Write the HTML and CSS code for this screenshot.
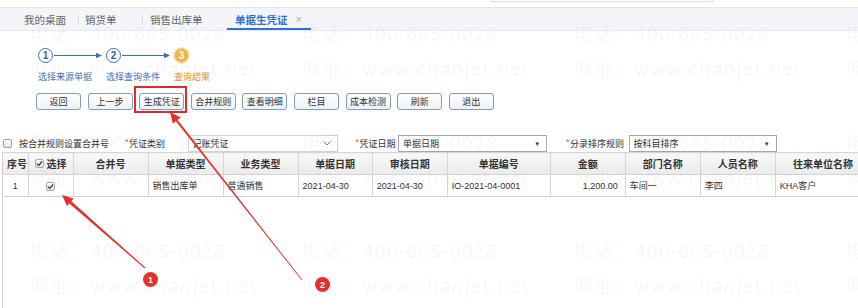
FILE: index.html
```html
<!DOCTYPE html>
<html lang="zh-CN">
<head>
    <meta charset="UTF-8">
    <meta name="viewport" content="width=device-width, initial-scale=1.0">
    <title>单据生凭证</title>
    <link rel="stylesheet" href="styles.css">
</head>
<body>
<div class="page">

    <div class="topstrip"><div class="scroll-edge"></div></div>

    <!-- 页签 -->
    <div class="tabs">
        <span class="tab first">我的桌面</span>
        <span class="sep"></span>
        <span class="tab">销货单</span>
        <span class="sep"></span>
        <span class="tab wide">销售出库单</span>
        <span class="tab active">单据生凭证<span class="close">×</span></span>
    </div>

    <!-- 步骤 -->
    <div class="steps">
        <div class="step">
            <div class="step-head">
                <span class="num">1</span>
                <svg class="arrow" width="48" height="7" viewBox="0 0 48 7"><line x1="0" y1="3.5" x2="43" y2="3.5"/><polygon points="42,0.8 48,3.5 42,6.2"/></svg>
            </div>
            <div class="step-label">选择来源单据</div>
        </div>
        <div class="step">
            <div class="step-head">
                <span class="num">2</span>
                <svg class="arrow" width="48" height="7" viewBox="0 0 48 7"><line x1="0" y1="3.5" x2="43" y2="3.5"/><polygon points="42,0.8 48,3.5 42,6.2"/></svg>
            </div>
            <div class="step-label">选择查询条件</div>
        </div>
        <div class="step current">
            <div class="step-head">
                <span class="num">3</span>
            </div>
            <div class="step-label">查询结果</div>
        </div>
    </div>

    <!-- 按钮 -->
    <div class="toolbar">
        <button class="btn">返回</button>
        <button class="btn">上一步</button>
        <button class="btn">生成凭证</button>
        <button class="btn">合并规则</button>
        <button class="btn">查看明细</button>
        <button class="btn">栏目</button>
        <button class="btn">成本检测</button>
        <button class="btn">刷新</button>
        <button class="btn">退出</button>
    </div>

    <!-- 条件 -->
    <div class="filter">
        <span class="chk"></span>
        <span class="flabel">按合并规则设置合并号</span>
        <span class="field f-type"><i class="req">*</i>凭证类别</span>
        <span class="combo c-type">记账凭证
            <svg width="8" height="5" viewBox="0 0 8 5"><polyline points="0.5,0.5 4,4 7.5,0.5"/></svg>
        </span>
        <span class="field f-date"><i class="req">*</i>凭证日期</span>
        <span class="combo c-date">单据日期<b class="down">▼</b></span>
        <span class="field f-sort"><i class="req">*</i>分录排序规则</span>
        <span class="combo c-sort">按科目排序<b class="down">▼</b></span>
    </div>

    <!-- 列表 -->
    <div class="grid">
        <table>
            <colgroup>
                <col style="width:25px"><col style="width:45px"><col style="width:75px"><col style="width:75px">
                <col style="width:75px"><col style="width:74px"><col style="width:75px"><col style="width:103px">
                <col style="width:75px"><col style="width:75px"><col style="width:75px"><col style="width:95px">
            </colgroup>
            <tr>
                <th>序号</th>
                <th><span class="pick"><span class="cb"><svg width="7" height="7" viewBox="0 0 7 7"><polyline points="1,3.6 2.8,5.4 6,1.5"/></svg></span>选择</span></th>
                <th>合并号</th>
                <th>单据类型</th>
                <th>业务类型</th>
                <th>单据日期</th>
                <th>审核日期</th>
                <th>单据编号</th>
                <th>金额</th>
                <th>部门名称</th>
                <th>人员名称</th>
                <th>往来单位名称</th>
            </tr>
            <tr>
                <td class="c">1</td>
                <td class="c"><span class="cb"><svg width="7" height="7" viewBox="0 0 7 7"><polyline points="1,3.6 2.8,5.4 6,1.5"/></svg></span></td>
                <td></td>
                <td>销售出库单</td>
                <td>普通销售</td>
                <td>2021-04-30</td>
                <td>2021-04-30</td>
                <td>IO-2021-04-0001</td>
                <td class="r">1,200.00</td>
                <td>车间一</td>
                <td>李四</td>
                <td>KHA客户</td>
            </tr>
        </table>
    </div>

    <!-- 水印 -->
    <div class="watermark">
        <div class="wm"><p>电话：400-665-0028</p><p>网址：www.chanjet.net</p></div>
        <div class="wm"><p>电话：400-665-0028</p><p>网址：www.chanjet.net</p></div>
        <div class="wm"><p>电话：400-665-0028</p><p>网址：www.chanjet.net</p></div>
        <div class="wm"><p>电话：400-665-0028</p><p>网址：www.chanjet.net</p></div>
        <div class="wm"><p>电话：400-665-0028</p><p>网址：www.chanjet.net</p></div>
        <div class="wm"><p>电话：400-665-0028</p><p>网址：www.chanjet.net</p></div>
        <div class="wm"><p>电话：400-665-0028</p><p>网址：www.chanjet.net</p></div>
        <div class="wm"><p>电话：400-665-0028</p><p>网址：www.chanjet.net</p></div>
        <div class="wm"><p>电话：400-665-0028</p><p>网址：www.chanjet.net</p></div>
        <div class="wm"><p>电话：400-665-0028</p><p>网址：www.chanjet.net</p></div>
        <div class="wm"><p>电话：400-665-0028</p><p>网址：www.chanjet.net</p></div>
        <div class="wm"><p>电话：400-665-0028</p><p>网址：www.chanjet.net</p></div>
    </div>

    <!-- 标注 -->
    <svg class="marks" width="858" height="308" viewBox="0 0 858 308">
        <rect x="135" y="87" width="51" height="25" class="box"/>
        <polygon class="red" points="62,195 73.6,198.5 71.3,201.2 145.3,267.6 144.7,268.4 69.3,203.4 67,206"/>
        <polygon class="red" points="170,112 180.7,117.5 177.6,120 302.3,279.8 301.7,280.2 175.9,121.2 172.9,123.7"/>
        <circle cx="150.5" cy="279.5" r="7.5" class="red"/>
        <text x="150.5" y="282.8" class="badge">1</text>
        <circle cx="322.5" cy="284.5" r="7.5" class="red"/>
        <text x="322.5" y="287.8" class="badge">2</text>
    </svg>

</div>
</body>
</html>
```

FILE: styles.css
```css
* {
    margin: 0;
    padding: 0;
    box-sizing: border-box;
}

body {
    font-family: "Liberation Sans", "Noto Sans CJK SC", sans-serif;
    font-size: 9px;
    color: #333;
    background-color: #fff;
}

.page {
    position: relative;
    width: 858px;
    height: 308px;
    overflow: hidden;
}

.topstrip {
    height: 7px;
}

.scroll-edge {
    margin-left: 490px;
    width: 223px;
    height: 2px;
    border: 1px solid #dadada;
    border-top: none;
    border-radius: 0 0 4px 4px;
}

/* 页签 */
.tabs {
    display: flex;
    height: 24px;
    padding-left: 24px;
    background-color: #f3f5fa;
    border-top: 1px solid #e3e6ed;
    border-bottom: 1px solid #e8ebf1;
    font-size: 10.5px;
    color: #666;
}

.tab {
    display: flex;
    align-items: center;
    min-width: 63px;
    padding-left: 6px;
}

.tab.first {
    min-width: 54px;
    padding-left: 0;
}

.tab.wide {
    min-width: 84px;
    padding-left: 7px;
}

.tab.active {
    min-width: 0;
    padding: 2px 9px 0 8px;
    color: #2e6fd5;
    font-weight: bold;
    border-bottom: 2px solid #2e6fd5;
}

.close {
    margin-left: 8px;
    font-weight: normal;
    font-size: 11px;
    color: #aaa;
}

.sep {
    width: 1px;
    margin: 6px 0;
    background-color: #dcdfe6;
}

/* 步骤 */
.steps {
    display: flex;
    padding: 17px 0 0 38px;
}

.step {
    width: 68px;
}

.step.current {
    width: auto;
}

.step-head {
    display: flex;
    align-items: center;
    height: 15px;
}

.num {
    display: flex;
    align-items: center;
    justify-content: center;
    width: 15px;
    height: 15px;
    border: 1.5px solid #3d6fb0;
    border-radius: 50%;
    font-size: 10px;
    font-weight: bold;
    color: #2d5e9e;
}

.arrow {
    margin-left: 1px;
}

.arrow line {
    stroke: #3d6fb0;
    stroke-width: 1;
}

.arrow polygon {
    fill: #3d6fb0;
}

.step.current .num {
    background-color: #f5b145;
    border-color: #fbd690;
    color: #fff;
    box-shadow: 0 0 0 1px #fde9c4;
}

.step-label {
    margin-top: 8px;
    line-height: 12px;
    color: #3a74ba;
    white-space: nowrap;
}

.step.current .step-label {
    color: #e88d2c;
}

/* 按钮 */
.toolbar {
    display: flex;
    gap: 6.6px;
    margin-top: 10px;
    padding-left: 36px;
}

.btn {
    width: 45px;
    height: 17px;
    border: 1px solid #7c9fbe;
    border-radius: 3px;
    background: linear-gradient(#ffffff, #eef1f4);
    font-family: inherit;
    font-size: 9px;
    color: #333;
}

/* 条件 */
.filter {
    display: flex;
    align-items: center;
    height: 17px;
    margin-top: 25px;
    padding-left: 3px;
}

.chk {
    width: 9px;
    height: 9px;
    margin-right: 7px;
    border: 1px solid #a0a0a0;
    border-radius: 2px;
    background: linear-gradient(#ffffff, #e6e6e6);
}

.field {
    white-space: nowrap;
}

.req {
    font-style: normal;
    color: #f05050;
    position: relative;
    top: -2px;
    margin-right: 0.5px;
}

.f-type { margin-left: 16px; }
.f-date { margin-left: 18px; }
.f-sort { margin-left: 19px; }

.combo {
    display: flex;
    align-items: center;
    justify-content: space-between;
    height: 17px;
    padding: 0 6px 0 4px;
    border: 1px solid #a6a6a6;
    background-color: #fff;
}

.c-type {
    width: 150px;
    margin-left: 22.5px;
    border-color: #d3d3d3;
}

.c-type svg polyline {
    fill: none;
    stroke: #777;
    stroke-width: 1;
}

.c-date {
    width: 149px;
    margin-left: 2.5px;
}

.c-sort {
    width: 148px;
    margin-left: 4.5px;
}

.down {
    font-size: 6px;
    font-weight: normal;
    color: #333;
}

/* 列表 */
.grid {
    height: 156px;
    margin-left: 2px;
    border-left: 1px solid #cfcfcf;
}

table {
    width: 868px;
    border-collapse: collapse;
    table-layout: fixed;
}

th,
td {
    height: 22px;
    padding: 0 4px;
    border: 1px solid #d5d5d5;
    white-space: nowrap;
    overflow: hidden;
}

th:first-child,
td:first-child {
    border-left: none;
}

th {
    background: linear-gradient(#f8f8f8, #ebebeb);
    font-size: 10px;
    font-weight: bold;
    color: #333;
    text-align: center;
}

td {
    font-size: 9px;
    text-align: left;
}

td.c {
    text-align: center;
}

td.r {
    text-align: right;
    padding-right: 7px;
}

.pick {
    display: inline-flex;
    align-items: center;
    gap: 3px;
}

.cb {
    display: inline-flex;
    align-items: center;
    justify-content: center;
    width: 9px;
    height: 9px;
    border: 1px solid #a8a8a8;
    border-radius: 2px;
    background: linear-gradient(#fdfdfd, #e2e2e2);
    vertical-align: middle;
}

.cb polyline {
    fill: none;
    stroke: #333;
    stroke-width: 1.3;
}

/* 水印 */
.watermark {
    position: absolute;
    top: 17px;
    left: 30px;
    display: grid;
    grid-template-columns: repeat(4, 272px);
    grid-auto-rows: 108.5px;
    font-family: "Noto Sans", "Noto Sans CJK SC", sans-serif;
    font-size: 19px;
    line-height: 35px;
    letter-spacing: 1.2px;
    color: rgba(0, 0, 0, 0.055);
    white-space: nowrap;
    pointer-events: none;
}

/* 标注 */
.marks {
    position: absolute;
    top: 0;
    left: 0;
    pointer-events: none;
}

.marks .box {
    fill: none;
    stroke: #e0282e;
    stroke-width: 2;
}

.marks .red {
    fill: #e5302b;
}

.marks .badge {
    fill: #fff;
    font-family: "Liberation Sans", sans-serif;
    font-size: 9px;
    font-weight: bold;
    text-anchor: middle;
}
```
